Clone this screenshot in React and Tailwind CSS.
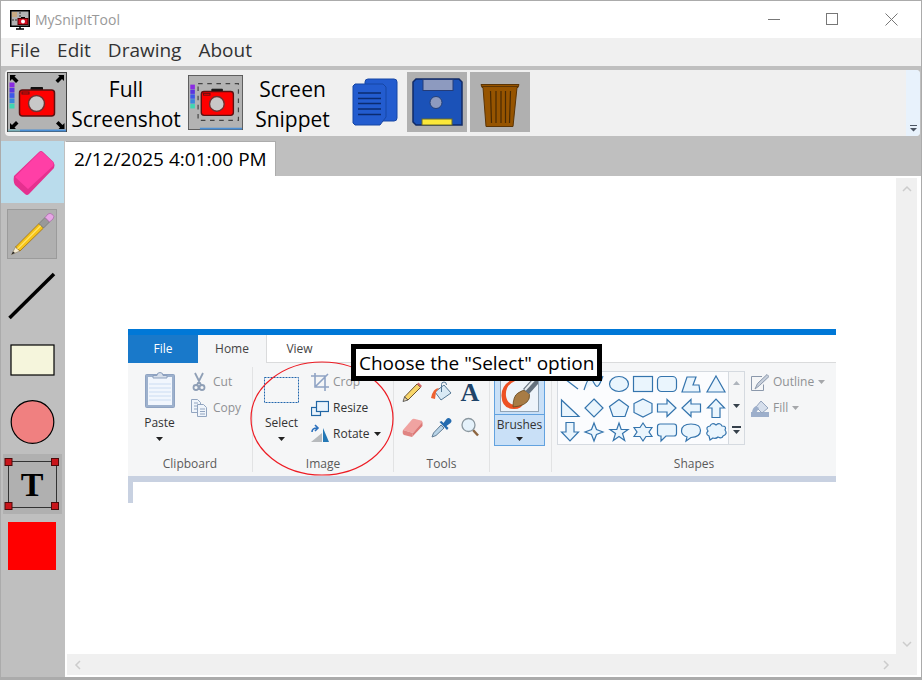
import React from "react";

const swatches = ["#8a2be2", "#5a35e0", "#3d57e8", "#3a86dd", "#3fd6b0"];

function Camera() {
  return (
    <g>
      <path d="M24 19v-3.500h11.500v3.500" fill="#111" stroke="#111" />
      <rect x="12.500" y="18" width="35" height="26" rx="3" fill="#fe0000" stroke="#5c1010" strokeWidth="1.500" />
      <rect x="15" y="20" width="7" height="2" fill="none" stroke="#5c1010" />
      <circle cx="29.500" cy="31.500" r="8" fill="#c8c8c8" stroke="#703030" strokeWidth="1.500" />
    </g>
  );
}

function Swatches() {
  return swatches.map((c, i) => (
    <rect key={c} x="2.500" y={10.5 + i * 5.3} width="5" height="4.800" fill={c} />
  ));
}

function FullIcon() {
  return (
    <svg width="60" height="60" viewBox="0 0 60 60" aria-hidden="true">
      <rect x="0.500" y="0.500" width="59" height="59" fill="#b3b3b3" stroke="#444" />
      <path d="M1 58.500h12" stroke="#7ab0b8" strokeWidth="2" />
      <path d="M13 58.500h46" stroke="#4a8fd6" strokeWidth="2" />
      <Swatches />
      <Camera />
      <g fill="#000">
        <path d="M3 3h6l-1.500 1.500 4 4-2.500 2.500-4-4L3 9z" />
        <path d="M57 3h-6l1.500 1.500-4 4 2.500 2.500 4-4L57 9z" />
        <path d="M3 57h6l-1.500-1.500 4-4L9 49l-4 4-2-2z" />
        <path d="M57.500 57h-6l1.500-1.500-4-4 2.500-2.500 4 4 2-2z" />
      </g>
    </svg>
  );
}

function SnippetIcon() {
  return (
    <svg width="55" height="55" viewBox="0 0 60 60" aria-hidden="true">
      <rect x="0.500" y="0.500" width="59" height="59" fill="#b3b3b3" stroke="#555" />
      <path d="M13 58.500h46" stroke="#4a8fd6" strokeWidth="2" />
      <Swatches />
      <rect x="11" y="9.500" width="44" height="40" fill="none" stroke="#444" strokeWidth="1.300" strokeDasharray="5 5" />
      <g transform="translate(2 0)">
        <Camera />
      </g>
    </svg>
  );
}

function CopyIcon() {
  return (
    <svg width="48" height="50" viewBox="0 0 48 50" aria-hidden="true">
      <rect x="13" y="2" width="32" height="42" rx="3" fill="#235ccf" stroke="#1746a5" />
      <path d="M3 7h28l3 3v30l-6 8H3l-2-2V9z" fill="#235ccf" stroke="#1746a5" strokeLinejoin="round" />
      <path d="M6 16h23M6 21.500h23M6 26.500h23M6 32h23M6 37.500h23" stroke="#0b2b70" strokeWidth="1.500" />
    </svg>
  );
}

function SaveIcon() {
  return (
    <svg width="60" height="60" viewBox="0 0 60 60" aria-hidden="true">
      <path d="M9 7h43l3 3v43H9l-3-3V10z" fill="#1b52b8" stroke="#102a66" strokeWidth="1.500" />
      <rect x="16" y="7.500" width="30" height="11" fill="#8d9abf" stroke="#243c78" />
      <circle cx="29" cy="30.500" r="6" fill="#8d9abf" stroke="#244078" />
      <rect x="15" y="47" width="30" height="6" fill="#fbe83a" stroke="#6a6a2a" />
    </svg>
  );
}

function TrashIcon() {
  return (
    <svg width="60" height="60" viewBox="0 0 60 60" aria-hidden="true">
      <path d="M11 12.500h38l-1 3h-1l-4 39H16L13 15.500h-1z" fill="#965400" stroke="#5c3403" />
      <path d="M12 14.500h36" stroke="#5c3403" />
      <path d="M20.500 19l1 32M26 19v32M31 19v32M35.500 19v32M40.500 19l-1 32" stroke="#4a2a02" strokeWidth="1.200" />
    </svg>
  );
}

const tools = [
  {
    name: "Eraser",
    cls: "h-[62px] bg-[#badcec]",
    art: (
      <>
        <path d="M13 35L38 11Q40 9 42 11L52.500 21Q54 23 53 27L28 53Q26 55 24 53L14 44Q12 41 13 35z" fill="#e5308f" />
        <path d="M14 36L38.500 11.500Q40 10 41.500 11.500L52 21Q53 23 52 25L27 48Z" fill="#ff3fa6" />
      </>
    ),
  },
  {
    name: "Pencil",
    cls: "h-[62px]",
    art: (
      <>
        <rect x="6.500" y="6.500" width="49" height="49" fill="#b0b0b0" stroke="#9b9b9b" />
        <path d="M10.500 51.500l4-7.500 4.500 4z" fill="#f5ecd4" stroke="#8a7a5a" strokeWidth="0.600" />
        <path d="M10.500 51.500l1.500-3 2 1.500z" fill="#222" />
        <path d="M14.500 44L38 20.500l4.500 4.500L19 48z" fill="#f6c519" stroke="#9b6c17" strokeWidth="0.800" />
        <path d="M16.500 46L40 22.500" stroke="#ffe36a" strokeWidth="1.300" />
        <path d="M38 20.500l6-6 4.500 4.500-6 6z" fill="#999" stroke="#777" strokeWidth="0.800" />
        <path d="M44 14.500l3-3.500q2-1.500 4.500.5t.5 4.500l-3.500 3z" fill="#e7a6e6" stroke="#a870a8" strokeWidth="0.800" />
      </>
    ),
  },
  { name: "Line", cls: "h-[62px]", art: <path d="M8.500 53L53 9" stroke="#000" strokeWidth="3.500" /> },
  {
    name: "Rectangle",
    cls: "h-[63px]",
    art: <rect x="10" y="17" width="43" height="30" fill="#f5f5dc" stroke="#000" strokeWidth="1.200" />,
  },
  { name: "Ellipse", cls: "h-[63px]", art: <circle cx="31.500" cy="31" r="21.300" fill="#f08080" stroke="#000" strokeWidth="1.200" /> },
  {
    name: "Text",
    cls: "h-[63px]",
    art: (
      <>
        <rect x="2" y="0" width="59" height="60" fill="#b0b0b0" />
        <rect x="7.500" y="7.500" width="48" height="46" fill="none" stroke="#333" />
        <g fill="#c9151b" stroke="#4d0b0b">
          <rect x="4" y="4.500" width="7" height="7" />
          <rect x="50.500" y="4.500" width="7" height="7" />
          <rect x="4" y="48.500" width="7" height="7" />
          <rect x="50.500" y="48.500" width="7" height="7" />
        </g>
        <text x="31" y="42" textAnchor="middle" fontFamily="Liberation Serif, serif" fontWeight="bold" fontSize="34">
          T
        </text>
      </>
    ),
  },
  { name: "Color", cls: "h-[62px]", art: <rect x="7" y="6" width="48" height="48" fill="#ff0000" /> },
];

function Arrow({ className = "text-[#222]" }) {
  return (
    <svg width="7" height="4" viewBox="0 0 7 4" className={className} aria-hidden="true">
      <path d="M0 0h7L3.500 4z" fill="currentColor" />
    </svg>
  );
}

function Group({ label, className, children }) {
  return (
    <section className={`flex flex-col pt-[2px] ${className}`}>
      <div className="flex h-[92px]">{children}</div>
      {label && <h2 className="text-center text-xs leading-4 text-[#5a5a5a]">{label}</h2>}
    </section>
  );
}

function Row({ icon, label, arrow, dim }) {
  return (
    <button type="button" className={`flex h-[26px] items-center gap-1 text-xs ${dim ? "text-[#8f9194]" : "text-[#333]"}`}>
      <svg width="18" height="20" viewBox="0 0 18 20" fill="none" aria-hidden="true">
        {icon}
      </svg>
      <span>{label}</span>
      {arrow && <Arrow className={dim ? "text-[#a5a7aa]" : "text-[#222]"} />}
    </button>
  );
}

const shapes = [
  <path d="M3 4l17 13" />,
  <path d="M2 18C7 2 9 5 12 11s5 4 9-7" />,
  <ellipse cx="12" cy="12" rx="9.500" ry="7.500" />,
  <rect x="2.500" y="4.500" width="19" height="15" />,
  <rect x="2.500" y="4.500" width="19" height="15" rx="4" />,
  <path d="M8 5h9l-3 8h6l1 7H3z" />,
  <path d="M12 4l9 16H3z" />,
  <path d="M3.500 4v16.500H21z" />,
  <path d="M12 3l9 9-9 9-9-9z" />,
  <path d="M12 3.500l9.500 7-3.500 10H6l-3.500-10z" />,
  <path d="M12 3l9 4.500v9L12 21l-9-4.500v-9z" />,
  <path d="M2.500 8H12V3.500l9 8.500-9 8.500V16H2.500z" />,
  <path d="M21.500 8H12V3.500L3 12l9 8.500V16h9.500z" />,
  <path d="M8 21.500V12H3.500L12 3l8.500 9H16v9.500z" />,
  <path d="M8 2.500V12H3.500L12 21l8.500-9H16V2.500z" />,
  <path d="M12 3l2.500 6.500L21 12l-6.500 2.500L12 21l-2.500-6.500L3 12l6.500-2.500z" />,
  <path d="M12 3l2.200 6.500H21l-5.500 4 2.200 7L12 16.500l-5.700 4 2.200-7-5.500-4h6.800z" />,
  <path d="M12 3l3 4.500h6L18 12l3 4.500h-6L12 21l-3-4.500H3L6 12 3 7.500h6z" />,
  <path d="M5 4h14q2.500 0 2.500 2.500v7Q21.500 16 19 16h-8l-5 5v-5H5q-2.500 0-2.500-2.500v-7Q2.500 4 5 4z" />,
  <path d="M8 17q-5.500-2-5.500-6 0-7 9.500-7t9.500 6.500T12 17.500L7 21z" />,
  <path d="M5 16q-4-2-1-5-3-4 2-5 2-4 6-1 4-3 6 1 5 0 3 4 3 4-2 6-1 3-5 1-2 2-5 1l-3 2z" />,
];

function Ribbon() {
  return (
    <div className="relative w-[708px] text-xs">
      <div className="h-[6px] bg-[#0078d7]" />
      <div className="flex h-[28px]">
        <button type="button" className="w-[70px] bg-[#1979ca] text-white">File</button>
        <button type="button" className="w-[68px] bg-[#f5f6f7] text-[#444]">Home</button>
        <button type="button" className="w-[66px] border-b border-l border-[#dadbdc] text-[#444]">View</button>
        <div className="flex-1 border-b border-[#dadbdc]" />
      </div>
      <div className="flex h-[113px] divide-x divide-[#e2e3e4] bg-[#f5f6f7] pb-1 pt-1">
        <Group label="Clipboard" className="w-[125px]">
          <button type="button" className="flex w-[63px] flex-col items-center pt-[2px] text-[#333]">
            <svg width="32" height="38" viewBox="0 0 32 38" aria-hidden="true">
              <rect x="1.500" y="3.500" width="29" height="33" rx="1" fill="#9db1cd" stroke="#8fa3c2" />
              <rect x="4" y="6" width="24" height="28" fill="#f1f6fd" />
              <path d="M5 13h22M5 17h22M5 21h22M5 25h22M5 29h22" stroke="#cbdcf2" />
              <path d="M9 7V4.500h4q0-3 3-3t3 3h4V7z" fill="#d7dfeb" stroke="#8da0bd" />
            </svg>
            <span className="mt-1 leading-5">Paste</span>
            <Arrow className="mt-1 text-[#222]" />
          </button>
          <div>
            <Row
              dim
              label="Cut"
              icon={<path d="M4 1l6 12M12 1L6 13M5 13a2.500 2.500 0 100 5 2.500 2.500 0 000-5zM11 13a2.500 2.500 0 100 5 2.500 2.500 0 000-5z" stroke="#8f9fb6" strokeWidth="1.800" />}
            />
            <Row
              dim
              label="Copy"
              icon={
                <g stroke="#92a5c0" fill="#f0f5fb">
                  <path d="M0.500 1.500h6l3 3v10h-9zM3 5h4M3 8h5M3 11h4" />
                  <path d="M6.500 6.500h6l3 3v9h-9zM9 11h5M9 13.500h5M9 16h5" />
                </g>
              }
            />
          </div>
        </Group>
        <Group label="Image" className="w-[141px]">
          <button type="button" className="flex w-[57px] flex-col items-center pt-[2px] text-[#333]">
            <svg width="36" height="38" viewBox="0 0 36 38" aria-hidden="true">
              <rect x="0.500" y="6.500" width="34" height="25" fill="none" stroke="#2166ad" strokeDasharray="2 1" />
            </svg>
            <span className="mt-1 leading-5">Select</span>
            <Arrow className="mt-1 text-[#222]" />
          </button>
          <div className="pl-px">
            <Row dim label="Crop" icon={<path d="M4 1v14h14M0 4h14v15M5 14L17 2" stroke="#8fa3c4" strokeWidth="1.600" />} />
            <Row
              label="Resize"
              icon={
                <g fill="#e9f3fc" stroke="#2166a5" strokeWidth="1.200">
                  <rect x="0.500" y="9.500" width="9" height="8" />
                  <rect x="5.500" y="3.500" width="12" height="10" />
                </g>
              }
            />
            <Row
              arrow
              label="Rotate"
              icon={
                <g>
                  <path d="M0 18L11 9v9z" fill="#b7babd" />
                  <path d="M12 4l6 14h-6z" fill="#2478b5" />
                  <path d="M1 8q0-4 5-4M4 1l3 3-3 3" stroke="#2b70bd" strokeWidth="1.600" />
                </g>
              }
            />
          </div>
        </Group>
        <Group label="Tools" className="w-[96px]">
          <div className="grid h-[76px] w-[90px] grid-cols-3 pl-[5px] pt-[6px]">
            <svg width="28" height="35" viewBox="0 0 28 35" aria-hidden="true">
              <path d="M5.500 22L18 9l3.500 3.500L9 25z" fill="#f8d66a" stroke="#6d5530" />
              <path d="M4 26.500l1.500-4.500L9 25z" fill="#e8d5ad" stroke="#444" strokeWidth="0.800" />
              <path d="M18 9l1.500-1.500 3.500 3.500-1.500 1.500z" fill="#cf6869" />
            </svg>
            <svg width="28" height="35" viewBox="0 0 28 35" aria-hidden="true">
              <path d="M17 10l7 8-10 7-6-8z" fill="#d9eaf5" stroke="#557895" />
              <path d="M14.500 17V9.500q0-2.500 2.500-2.500t2.500 3" fill="none" stroke="#557895" />
              <path d="M12 13Q6 13 4 23l4 1 1-7z" fill="#ed6331" />
            </svg>
            <span className="text-center font-['Liberation_Serif',serif] text-[26px] font-bold leading-[35px] text-[#1f4469]">A</span>
            <svg width="28" height="35" viewBox="0 0 28 35" aria-hidden="true">
              <path d="M4 20L13 9.500q1-1 3-.5l6 1.500q2 .5 1 2.500L14 23z" fill="#f0a3a1" />
              <path d="M4 20l10 3-1 4-8-2q-2-1-1-5z" fill="#e08583" />
              <path d="M14 23l9.500-11v4L13 27z" fill="#dd7876" />
            </svg>
            <svg width="28" height="35" viewBox="0 0 28 35" aria-hidden="true">
              <path d="M5 27l1.500-4L14 15l3 3-8 7.500z" fill="#b8d4e8" stroke="#607b93" />
              <path d="M12.500 12l2-1 2 2 3-4q2-2 4 0t0 4l-4 3 2 2-1.500 2z" fill="#246baf" />
            </svg>
            <svg width="28" height="35" viewBox="0 0 28 35" aria-hidden="true">
              <path d="M17 20l5 5.500" stroke="#8d6540" strokeWidth="2.500" />
              <circle cx="12.500" cy="15" r="6.500" fill="#e5f2fb" stroke="#8a979f" strokeWidth="1.300" />
            </svg>
          </div>
        </Group>
        <Group className="w-[62px] px-1 pt-1">
          <button type="button" className="h-[77px] w-[51px] border border-[#62a2df] bg-[#c9e0f7] text-[#333]">
            <div className="flex h-[41px] items-end justify-center border-b border-[#62a2df] pb-[2px]">
              <svg width="39" height="36" viewBox="0 0 39 36" aria-hidden="true">
                <rect x="0.500" y="0.500" width="38" height="35" fill="#eef4fa" stroke="#91a4b5" />
                <path d="M15 2Q1 8 1.500 20 2 33 14 33q8 0 9-6l-8 2Q7 28 6 20 5 9 15 5z" fill="#ed5124" />
                <path d="M13 31q0-11 5-14 5-4 9-2 4 3 2 8-3 7-16 8z" fill="#a87c45" stroke="#65491f" strokeWidth="0.800" />
                <path d="M23 13L34 1h4v7L29 18z" fill="#65717d" />
                <path d="M25 14L36 2" stroke="#e7edf1" strokeWidth="2" />
              </svg>
            </div>
            <div className="flex flex-col items-center">
              <span className="leading-5">Brushes</span>
              <Arrow className="mt-[2px] text-[#222]" />
            </div>
          </button>
        </Group>
        <Group label="Shapes" className="flex-1">
          <div className="ml-[5px] mt-[2px] flex h-[74px] w-[188px] border border-[#d5dae0] bg-[#fbfcfe]">
            <div className="grid w-[170px] grid-cols-7">
              {shapes.map((s, i) => (
                <svg key={i} width="24" height="24" viewBox="0 0 24 24" fill="#eaf5fd" stroke="#3474ad" strokeWidth="1.200" aria-hidden="true">
                  {s}
                </svg>
              ))}
            </div>
            <div className="flex w-4 flex-col items-center justify-between border-l border-[#d5dae0] bg-[#f5f6f7] py-[9px]">
              <Arrow className="rotate-180 text-[#aeb4bc]" />
              <Arrow className="text-[#35404b]" />
              <svg width="9" height="9" viewBox="0 0 9 9" aria-hidden="true">
                <path d="M0 0h9v2H0zM1 4h7L4.500 8z" fill="#35404b" />
              </svg>
            </div>
          </div>
          <div className="ml-[6px]">
            <Row
              dim
              arrow
              label="Outline"
              icon={
                <g stroke="#8b98ab">
                  <path d="M11 4.500H0.500v14h12v-6" />
                  <path d="M4 17l2.500-5.500L16 2.500l2 2-9.500 9z" fill="#c8d0dc" />
                </g>
              }
            />
            <Row
              dim
              arrow
              label="Fill"
              icon={
                <g>
                  <path d="M0 14h18v5H0z" fill="#9dafcb" />
                  <path d="M10 3l7 7-6 5-6-6z" fill="#d6dfec" stroke="#94a4bd" />
                  <path d="M5 8q-4 2-4 7h4l3-5z" fill="#9dafcb" />
                </g>
              }
            />
          </div>
        </Group>
      </div>
      <div className="h-[6px] bg-[#c8d1e1]" />
      <div className="h-[21px] w-[5px] bg-[#c8d1e1]" />
      <svg className="absolute left-[122px] top-[32px]" width="145" height="116" viewBox="0 0 145 116" fill="none" aria-hidden="true">
        <ellipse cx="72" cy="57.500" rx="71" ry="56.500" stroke="#ed1c24" strokeWidth="1.200" />
      </svg>
      <div className="absolute left-[223px] top-[15px] whitespace-nowrap border-[5px] border-black bg-white px-[3px] pt-px text-[19px] leading-[26px] text-black">
        Choose the "Select" option
      </div>
    </div>
  );
}

function Chevron({ d, label }) {
  return (
    <button type="button" aria-label={label} className="flex h-[21px] w-[21px] items-center justify-center">
      <svg width="10" height="10" viewBox="0 0 10 10" fill="none" stroke="#cccccc" strokeWidth="1.500" aria-hidden="true">
        <path d={d} />
      </svg>
    </button>
  );
}

export default function App() {
  return (
    <div className="flex min-h-screen flex-col border border-b-[3px] border-[#ababab] bg-[#bfbfbf] font-['Open_Sans','Noto_Sans',sans-serif] text-black">
      <header className="flex h-[37px] items-center bg-white pl-[9px]">
        <svg width="20" height="20" viewBox="0 0 20 20" aria-hidden="true">
          <rect x="0.750" y="0.750" width="18.500" height="15.500" fill="#b3b3b3" stroke="#000" strokeWidth="1.500" />
          <rect x="2" y="2" width="5" height="5" fill="#c9aa83" />
          <path d="M2 10h5M10 2v5" stroke="#333" strokeDasharray="2 1" />
          <rect x="8" y="8.500" width="10" height="6" fill="#d30d20" stroke="#500" />
          <path d="M11 7.500h4" stroke="#000" />
          <circle cx="13" cy="11.500" r="2" fill="#fff" />
          <path d="M10 16v3M6 19h8" stroke="#000" strokeWidth="1.500" />
        </svg>
        <h1 className="ml-[5px] text-[14px] text-[#999]">MySnipItTool</h1>
        <div className="ml-auto flex text-[#777]">
          <button type="button" aria-label="Minimize" className="flex h-9 w-[58px] items-center justify-center">
            <svg width="13" height="13" stroke="currentColor" aria-hidden="true"><path d="M0 6.500h12" /></svg>
          </button>
          <button type="button" aria-label="Maximize" className="flex h-9 w-[58px] items-center justify-center">
            <svg width="13" height="13" stroke="currentColor" fill="none" aria-hidden="true"><rect x="0.500" y="0.500" width="11" height="11" /></svg>
          </button>
          <button type="button" aria-label="Close" className="flex h-9 w-[60px] items-center justify-center">
            <svg width="13" height="13" stroke="currentColor" aria-hidden="true"><path d="M0.500 0.500l12 12M12.500 0.500l-12 12" /></svg>
          </button>
        </div>
      </header>
      <nav className="flex h-[28px] items-center gap-[17px] bg-[#f0f0f0] pb-1 pl-[9px] text-[19px] leading-6 text-[#333]">
        <button type="button">File</button>
        <button type="button">Edit</button>
        <button type="button">Drawing</button>
        <button type="button">About</button>
      </nav>
      <div role="toolbar" className="mb-[5px] ml-1 mr-px mt-1 flex h-[66px] items-center rounded bg-[#f0f0f0] pl-[2px] text-[21px] leading-[30px]">
        <button type="button" className="flex items-center pb-[2px]">
          <FullIcon />
          <span className="w-[118px] pt-1">Full<br />Screenshot</span>
        </button>
        <button type="button" className="ml-[3px] flex items-center pb-[2px]">
          <SnippetIcon />
          <span className="w-[99px] pt-1">Screen<br />Snippet</span>
        </button>
        <button type="button" aria-label="Copy" className="ml-[10px] pb-[2px]"><CopyIcon /></button>
        <div className="mb-[2px] ml-[7px] flex gap-[3px]">
          <button type="button" aria-label="Save" className="bg-[#b0b0b0]"><SaveIcon /></button>
          <button type="button" aria-label="Delete" className="bg-[#b0b0b0]"><TrashIcon /></button>
        </div>
        <button type="button" aria-label="More" className="ml-auto flex h-full w-[14px] items-end justify-center rounded-r bg-[#e8f2fc] pb-1">
          <svg width="7" height="7" viewBox="0 0 7 7" aria-hidden="true">
            <path d="M0 0h7v1H0zM0 3h7L3.500 6.500z" fill="#4b5563" />
          </svg>
        </button>
      </div>
      <div className="flex flex-1">
        <aside className="flex w-16 flex-col bg-[#bfbfbf]">
          {tools.map((t) => (
            <button key={t.name} type="button" aria-label={t.name} className={`w-[63px] ${t.cls}`}>
              <svg width="63" height="62" viewBox="0 0 63 62" aria-hidden="true">{t.art}</svg>
            </button>
          ))}
        </aside>
        <main className="flex min-w-0 flex-1 flex-col">
          <div className="flex">
            <button type="button" className="h-[35px] border border-b-0 border-[#acacac] border-l-white bg-white px-2 text-[19px]">
              2/12/2025 4:01:00 PM
            </button>
          </div>
          <div className="flex flex-1 flex-col bg-white p-[2px]">
            <div className="flex flex-1">
              <div className="min-w-0 flex-1 pl-[61px] pt-[151px]">
                <Ribbon />
              </div>
              <div className="mr-[2px] flex w-[21px] flex-col justify-between bg-[#f0f0f0]">
                <Chevron label="Scroll up" d="M1 7l4-4 4 4" />
                <Chevron label="Scroll down" d="M1 3l4 4 4-4" />
              </div>
            </div>
            <div className="mr-[2px] flex justify-between bg-[#f0f0f0] pr-[21px]">
              <Chevron label="Scroll left" d="M7 1L3 5l4 4" />
              <Chevron label="Scroll right" d="M3 1l4 4-4 4" />
            </div>
          </div>
        </main>
      </div>
    </div>
  );
}
